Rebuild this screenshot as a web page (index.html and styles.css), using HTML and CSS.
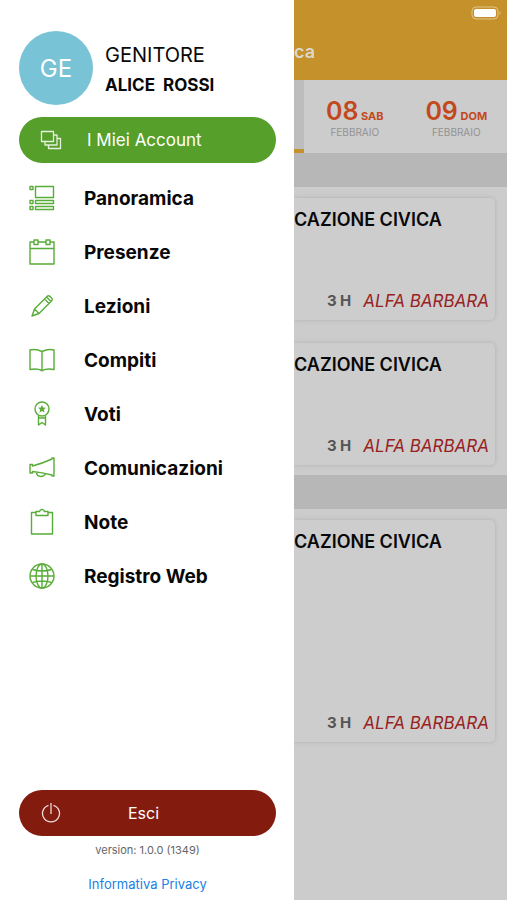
FILE: index.html
```html
<!DOCTYPE html>
<html lang="it">
<head>
<meta charset="utf-8">
<meta name="viewport" content="width=device-width, initial-scale=1">
<title>Registro</title>
<link rel="stylesheet" href="styles.css">
</head>
<body>
<aside class="drawer">
  <header class="profile">
    <div class="avatar">GE</div>
    <div class="identity">
      <p class="role">GENITORE</p>
      <p class="name">ALICE&nbsp; ROSSI</p>
    </div>
  </header>
  <button class="pill accounts" type="button">
    <svg class="pill-icon" viewBox="0 0 22 22"><path d="M1.500 2.500h12v10h-12zM13.500 6h3.500v10H5v-3.500M17 9.500h3.500v10H8.500V16"/></svg>
    <span>I Miei Account</span>
  </button>
  <nav class="menu">
    <a href="#panoramica"><svg viewBox="0 0 28 28"><path d="M7.500 2.500h18v11h-18zM7.500 16.500h18v3h-18zM7.500 22.500h18v3h-18zM2 2.500h3v3H2zM2 16.500h3v3H2zM2 22.500h3v3H2z"/></svg><span>Panoramica</span></a>
    <a href="#presenze"><svg viewBox="0 0 28 28"><path d="M6 4H2v22h24V4h-4M10 4h8M2 10.500h24M6 2h4v4.500H6zM18 2h4v4.500h-4z"/></svg><span>Presenze</span></a>
    <a href="#lezioni"><svg viewBox="0 0 28 28"><path d="M4 24l2.500-7L19 4.500q1.500-1.500 3 0L23.500 6q1.500 1.500 0 3L11 21.500zM6.500 17l4.500 4.500M16.500 7l4.500 4.500M18.500 5l4.500 4.500"/></svg><span>Lezioni</span></a>
    <a href="#compiti"><svg viewBox="0 0 28 28"><path d="M14 5.500Q8 2.500 2 4v19.500q7-1.500 12 1 5-2.500 12-1V4Q20 2.500 14 5.500v19M12.500 24.500h3"/></svg><span>Compiti</span></a>
    <a href="#voti"><svg viewBox="0 0 28 28"><circle cx="14" cy="9" r="7"/><path d="M10.500 15.500V25l3.500-2.500 3.500 2.500v-9.500M10.500 18h7"/><path class="solid" d="M14 4.800l1.100 2.700 2.900.2-2.200 1.900.7 2.800-2.500-1.500-2.500 1.500.7-2.800L10 7.700l2.900-.2z"/></svg><span>Voti</span></a>
    <a href="#comunicazioni"><svg viewBox="0 0 28 28"><path d="M2 10.500h2.500V12Q14 9.500 24 5V4h2v18h-2v-1Q14 18.500 4.500 17.500V19H2zM8.500 18q0 4.500 4.500 4.500 3.500 0 4.500-3"/></svg><span>Comunicazioni</span></a>
    <a href="#note"><svg viewBox="0 0 28 28"><path d="M8 4.500H3.500V26h21V4.500H20M8 3.500h3.500q.5-2 2.500-2t2.500 2H20v4H8z"/></svg><span>Note</span></a>
    <a href="#registro-web"><svg viewBox="0 0 28 28"><circle cx="14" cy="14" r="12"/><ellipse cx="14" cy="14" rx="6" ry="12"/><path d="M14 2v24M2 14h24M4.500 7.500q9.500 3 19 0M4.500 20.500q9.500-3 19 0"/></svg><span>Registro Web</span></a>
  </nav>
  <footer class="drawer-footer">
    <button class="pill logout" type="button">
      <svg class="pill-icon" viewBox="0 0 22 22"><path d="M8.500 3.300a8.500 8.500 0 1 0 5 0M11 1v11"/></svg>
      <span>Esci</span>
    </button>
    <p class="version">version: 1.0.0 (1349)</p>
    <a class="privacy" href="#privacy">Informativa Privacy</a>
  </footer>
</aside>
<main class="agenda">
  <header class="topbar">
    <svg class="battery" viewBox="0 0 30 14"><rect class="shell" x="1" y="1" width="26" height="12" rx="4"/><rect class="charge" x="3" y="3" width="22" height="8" rx="2"/><path class="charge tip" d="M28.500 5q2 2 0 4z"/></svg>
    <h1>ca</h1>
  </header>
  <div class="days">
    <div class="selected"></div>
    <button class="day" type="button"><span class="date"><b>08</b> SAB</span><span class="month">FEBBRAIO</span></button>
    <button class="day" type="button"><span class="date"><b>09</b> DOM</span><span class="month">FEBBRAIO</span></button>
  </div>
  <div class="band"></div>
  <section class="lessons">
    <article class="card"><h2>CAZIONE CIVICA</h2><p><span class="hours">3 H</span><em>ALFA BARBARA</em></p></article>
    <article class="card"><h2>CAZIONE CIVICA</h2><p><span class="hours">3 H</span><em>ALFA BARBARA</em></p></article>
  </section>
  <div class="band"></div>
  <section class="lessons">
    <article class="card tall"><h2>CAZIONE CIVICA</h2><p><span class="hours">3 H</span><em>ALFA BARBARA</em></p></article>
  </section>
</main>
</body>
</html>
```

FILE: styles.css
```css
* { box-sizing: border-box; }

body {
  margin: 0;
  min-height: 100vh;
  display: grid;
  grid-template-columns: 58fr 42fr;
  font-family: Inter, "Liberation Sans", sans-serif;
  color: #080808;
  background: #fff;
}

h1, h2, p { margin: 0; }
button { font: inherit; border: 0; cursor: pointer; }
a { text-decoration: none; }
svg { flex: none; fill: none; stroke: currentColor; stroke-linejoin: round; }

.drawer {
  display: flex;
  flex-direction: column;
  min-width: 0;
  padding: 31px 18px 7px 19px;
}

.profile {
  display: flex;
  align-items: center;
  gap: 12px;
  margin-bottom: 12px;
}

.avatar {
  display: grid;
  place-items: center;
  width: 74px;
  height: 74px;
  border-radius: 50%;
  background: #78c3d5;
  color: #fff;
  font-size: 24px;
}

.role { font-size: 20px; line-height: 30px; padding-top: 4px; }
.name { font-size: 17px; line-height: 30px; font-weight: 700; }

.pill {
  display: flex;
  align-items: center;
  width: 100%;
  height: 46px;
  padding: 0 20px;
  border-radius: 23px;
  color: #fff;
  font-size: 16px;
}

.pill-icon { width: 24px; height: 24px; padding: 1px; stroke-width: 1.300; opacity: 0.85; }
.accounts { gap: 24px; background: #569f2b; font-size: 17px; }
.logout { background: #841b0f; }
.logout span { flex: 1; padding-right: 32px; text-align: center; }

.menu {
  display: flex;
  flex-direction: column;
  padding-top: 8px;
}

.menu a {
  display: flex;
  align-items: center;
  gap: 28px;
  height: 54px;
  padding-left: 9px;
  color: #080808;
  font-size: 19px;
  font-weight: 700;
}

.menu svg { width: 28px; height: 28px; color: #58ac38; stroke-width: 1.400; }
.solid { fill: currentColor; stroke: none; }

.drawer-footer {
  margin-top: auto;
  display: flex;
  flex-direction: column;
  align-items: center;
}

.version { margin-top: 5px; font-size: 11px; line-height: 18px; color: #666; }
.privacy { margin-top: 16px; font-size: 13px; line-height: 18px; color: #2180e4; }

.agenda { min-width: 0; overflow: hidden; background: #ccc; }

.topbar {
  display: flex;
  flex-direction: column;
  height: 80px;
  padding: 6px 6px 0 0;
  background: #c4912b;
}

.battery { width: 30px; height: 14px; align-self: flex-end; }
.shell { stroke: #e0c48c; stroke-width: 1; }
.charge { fill: #fff; stroke: none; }
.tip { fill: #e0c48c; }
.topbar h1 { margin-top: 20px; font-size: 18px; line-height: 24px; font-weight: 600; color: #ddd8cc; }

.days {
  display: grid;
  grid-template-columns: 10px 1fr 1fr;
  height: 73px;
}

.selected { background: #bdbdbd; border-bottom: 4px solid #c4912b; }

.day {
  display: flex;
  flex-direction: column;
  align-items: center;
  justify-content: center;
  padding: 5px 0 0;
  background: none;
}

.date { font-size: 11px; line-height: 20px; font-weight: 700; color: #c2491d; white-space: nowrap; }
.date b { font-size: 25px; font-weight: 600; }
.month { font-size: 10px; line-height: 12px; color: #929292; }

.band { height: 34px; background: #b7b7b7; }

.lessons {
  display: flex;
  flex-direction: column;
  gap: 23px;
  padding: 11px 12px 10px 0;
}

.card {
  display: flex;
  flex-direction: column;
  justify-content: space-between;
  height: 122px;
  padding: 10px 6px 8px 0;
  border-radius: 0 5px 5px 0;
  background: #cdcdcd;
  box-shadow: 0 0 4px #b0b0b0;
}

.card.tall { height: 222px; }
.card h2 { font-size: 18px; line-height: 24px; font-weight: 600; white-space: nowrap; }
.card p { display: flex; align-items: center; justify-content: flex-end; gap: 12px; line-height: 22px; white-space: nowrap; }
.hours { font-size: 15px; font-weight: 700; color: #555; }
.card em { font-size: 17px; color: #982222; }
```
